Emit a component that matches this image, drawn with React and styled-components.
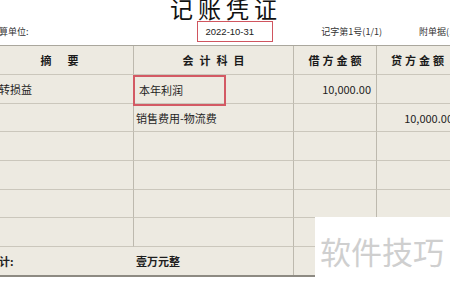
import React from 'react';
import styled, { createGlobalStyle } from 'styled-components';

const GlobalStyle = createGlobalStyle`
  body {
    margin: 0;
    background: #ffffff;
    font-family: "Noto Sans CJK SC", "Liberation Sans", sans-serif;
    overflow: hidden;
  }
`

const Page = styled.div`
  position: relative;
  width: 450px;
  height: 284px;
  overflow: hidden;
  background: #ffffff;
`

const Sheet = styled.div`
  width: 473px;
  margin-left: -14px;
`

const Title = styled.div`
  height: 21px;
  margin-top: -4px;
  text-align: center;
  font-size: 23px;
  line-height: 24px;
  letter-spacing: 5px;
  padding-left: 7px;
  color: #111;
`

const InfoRow = styled.div`
  display: flex;
  align-items: center;
  height: 21px;
  margin-top: 4px;
  font-size: 9px;
  color: #333;
`

const InfoText = styled.span`
  width: ${p => p.$w}px;
  padding-left: ${p => p.$pl || 0}px;
  white-space: nowrap;
`

const DateBox = styled.div`
  box-sizing: border-box;
  width: 77px;
  height: 21px;
  margin-right: 48px;
  border: 1.5px solid #d0555f;
  padding-left: 8px;
  display: flex;
  align-items: center;
  font-family: "Liberation Sans", sans-serif;
  font-size: 9.5px;
  color: #222;
`

const Table = styled.div`
  display: grid;
  grid-template-columns: 148px 160px 83px 82px;
  grid-template-rows: 29px 29px 28px 29px 29px 28px 29px 28px;
  margin-top: 3px;
  background: #edeae1;
  border-top: 1px solid #aaa79d;
  border-bottom: 2px solid #8d8a82;
`

const Cell = styled.div`
  box-sizing: border-box;
  display: flex;
  align-items: center;
  justify-content: ${p => (p.$align === 'right' ? 'flex-end' : p.$align === 'center' ? 'center' : 'flex-start')};
  padding: ${p => (p.$align === 'right' ? '0 5px 0 0' : p.$align === 'center' ? '0' : '0 0 0 2px')};
  border-right: ${p => (p.$noRight ? 'none' : '1px solid #bdb9ae')};
  border-bottom: ${p => (p.$last ? 'none' : '1px solid #cbc7bc')};
  font-size: 11px;
  color: #1e1e1e;
  white-space: nowrap;
  overflow: visible;
`

const HeadCell = styled(Cell)`
  font-weight: bold;
  letter-spacing: ${p => p.$ls}px;
  padding-left: ${p => p.$ls}px;
  color: #1a1a1a;
`

const SubjectCell = styled(Cell)`
  position: relative;
  z-index: 1;
`

const Subject = styled.div`
  box-sizing: border-box;
  display: flex;
  align-items: center;
  flex: none;
  width: 93px;
  height: 31px;
  margin-left: -3px;
  margin-top: 2px;
  padding-left: 4px;
  border-width: 2px;
  border-style: solid;
  border-color: #d35a64;
`

const Bold = styled.span`
  font-weight: bold;
`

const Watermark = styled.div`
  position: absolute;
  left: 315px;
  top: 217px;
  width: 135px;
  height: 67px;
  background: #ffffff;
  display: flex;
  align-items: center;
  padding-left: 5px;
  box-sizing: border-box;
  font-size: 31px;
  color: #cfcfcf;
  white-space: nowrap;
`

const rows = [
  ['结转损益', 'subject', '10,000.00', ''],
  ['', '销售费用-物流费', '', '10,000.00'],
  ['', '', '', ''],
  ['', '', '', ''],
  ['', '', '', ''],
  ['', '', '', ''],
]

const App = () => {
  return (
    <Page>
      <GlobalStyle />
      <Sheet>
        <Title>记账凭证</Title>
        <InfoRow>
          <InfoText $w={207} $pl={4}>核算单位:</InfoText>
          <DateBox>2022-10-31</DateBox>
          <InfoText $w={98}>记字第1号(1/1)</InfoText>
          <InfoText $w={40}>附单据(1)</InfoText>
        </InfoRow>
        <Table>
          <HeadCell $align="center" $ls={16}>摘要</HeadCell>
          <HeadCell $align="center" $ls={6}>会计科目</HeadCell>
          <HeadCell $align="center" $ls={3}>借方金额</HeadCell>
          <HeadCell $align="center" $ls={3}>贷方金额</HeadCell>
          {rows.map((r, i) => (
            <React.Fragment key={i}>
              <Cell>{r[0]}</Cell>
              {r[1] === 'subject'
                ? <SubjectCell><Subject>本年利润</Subject></SubjectCell>
                : <Cell>{r[1]}</Cell>}
              <Cell $align="right">{r[2]}</Cell>
              <Cell $align="right">{r[3]}</Cell>
            </React.Fragment>
          ))}
          <Cell $noRight $last><Bold>合计:</Bold></Cell>
          <Cell $last><Bold>壹万元整</Bold></Cell>
          <Cell $last />
          <Cell $last />
        </Table>
      </Sheet>
      <Watermark>软件技巧</Watermark>
    </Page>
  )
}

export default App;
